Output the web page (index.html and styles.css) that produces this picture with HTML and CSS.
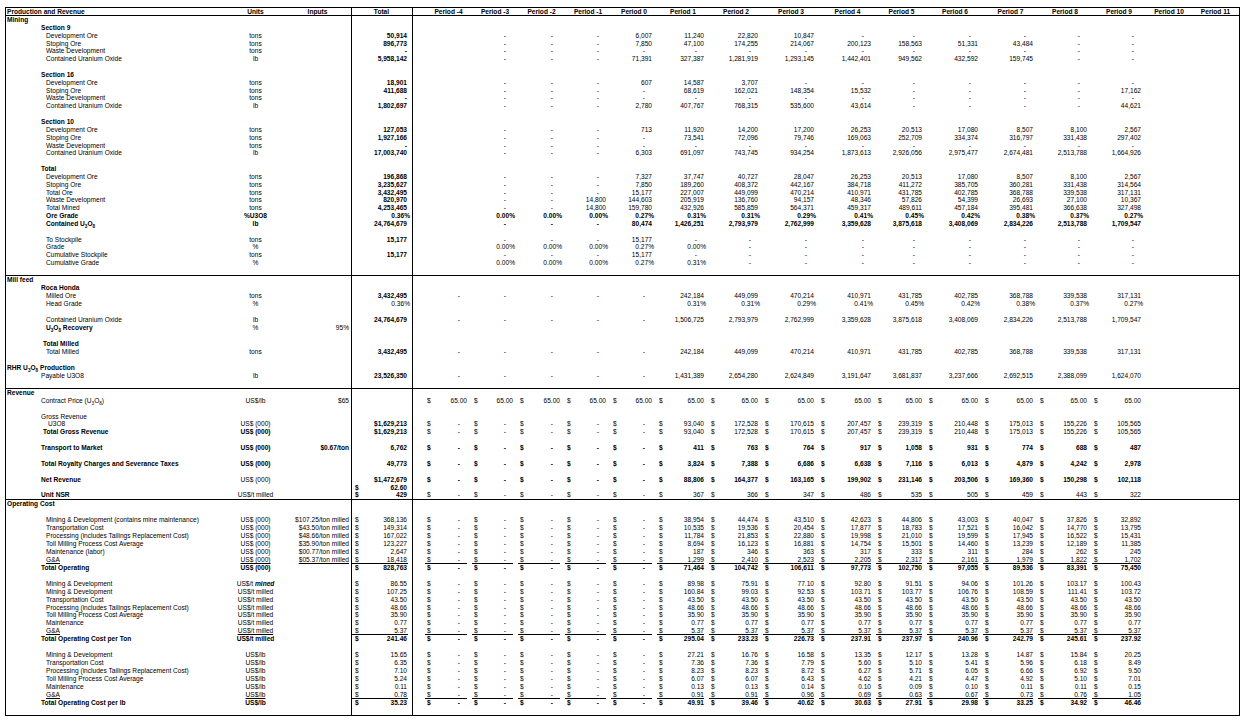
FILE: index.html
```html
<!DOCTYPE html>
<html lang="en">
<head>
<meta charset="utf-8">
<title>Production and Revenue</title>
<link rel="stylesheet" href="styles.css">
</head>
<body>
<div class="sheet">
<div class="r hdr"><span>Production and Revenue</span><span>Units</span><span class="ih">Inputs</span><span>Total</span><span></span><span>Period -4</span><span>Period -3</span><span>Period -2</span><span>Period -1</span><span>Period 0</span><span>Period 1</span><span>Period 2</span><span>Period 3</span><span>Period 4</span><span>Period 5</span><span>Period 6</span><span>Period 7</span><span>Period 8</span><span>Period 9</span><span>Period 10</span><span>Period 11</span></div>

<div class="sec sec-mine tb">
<div class="r b"><span class="i0">Mining</span></div>
<div class="r b"><span class="i1">Section 9</span></div>
<div class="r"><span class="i2">Development Ore</span><span>tons</span><span></span><span>50,914</span><span></span><span></span><span class="z">-</span><span class="z">-</span><span class="z">-</span><span>6,007</span><span>11,240</span><span>22,820</span><span>10,847</span><span class="z">-</span><span class="z">-</span><span class="z">-</span><span class="z">-</span><span class="z">-</span><span class="z">-</span></div>
<div class="r"><span class="i2">Stoping Ore</span><span>tons</span><span></span><span>896,773</span><span></span><span></span><span class="z">-</span><span class="z">-</span><span class="z">-</span><span>7,850</span><span>47,100</span><span>174,255</span><span>214,067</span><span>200,123</span><span>158,563</span><span>51,331</span><span>43,484</span><span class="z">-</span><span class="z">-</span></div>
<div class="r"><span class="i2">Waste Development</span><span>tons</span><span></span><span>-</span><span></span><span></span><span class="z">-</span><span class="z">-</span><span class="z">-</span><span class="z">-</span><span class="z">-</span><span class="z">-</span><span class="z">-</span><span class="z">-</span><span class="z">-</span><span class="z">-</span><span class="z">-</span><span class="z">-</span><span class="z">-</span></div>
<div class="r"><span class="i2">Contained Uranium Oxide</span><span>lb</span><span></span><span>5,958,142</span><span></span><span></span><span class="z">-</span><span class="z">-</span><span class="z">-</span><span>71,391</span><span>327,387</span><span>1,281,919</span><span>1,293,145</span><span>1,442,401</span><span>949,562</span><span>432,592</span><span>159,745</span><span class="z">-</span><span class="z">-</span></div>
<div class="r"></div>
<div class="r b"><span class="i1">Section 16</span></div>
<div class="r"><span class="i2">Development Ore</span><span>tons</span><span></span><span>18,901</span><span></span><span></span><span class="z">-</span><span class="z">-</span><span class="z">-</span><span>607</span><span>14,587</span><span>3,707</span><span class="z">-</span><span class="z">-</span><span class="z">-</span><span class="z">-</span><span class="z">-</span><span class="z">-</span><span class="z">-</span></div>
<div class="r"><span class="i2">Stoping Ore</span><span>tons</span><span></span><span>411,688</span><span></span><span></span><span class="z">-</span><span class="z">-</span><span class="z">-</span><span class="z">-</span><span>68,619</span><span>162,021</span><span>148,354</span><span>15,532</span><span class="z">-</span><span class="z">-</span><span class="z">-</span><span class="z">-</span><span>17,162</span></div>
<div class="r"><span class="i2">Waste Development</span><span>tons</span><span></span><span>-</span><span></span><span></span><span class="z">-</span><span class="z">-</span><span class="z">-</span><span class="z">-</span><span class="z">-</span><span class="z">-</span><span class="z">-</span><span class="z">-</span><span class="z">-</span><span class="z">-</span><span class="z">-</span><span class="z">-</span><span class="z">-</span></div>
<div class="r"><span class="i2">Contained Uranium Oxide</span><span>lb</span><span></span><span>1,802,697</span><span></span><span></span><span class="z">-</span><span class="z">-</span><span class="z">-</span><span>2,780</span><span>407,767</span><span>768,315</span><span>535,600</span><span>43,614</span><span class="z">-</span><span class="z">-</span><span class="z">-</span><span class="z">-</span><span>44,621</span></div>
<div class="r"></div>
<div class="r b"><span class="i1">Section 10</span></div>
<div class="r"><span class="i2">Development Ore</span><span>tons</span><span></span><span>127,053</span><span></span><span></span><span class="z">-</span><span class="z">-</span><span class="z">-</span><span>713</span><span>11,920</span><span>14,200</span><span>17,200</span><span>26,253</span><span>20,513</span><span>17,080</span><span>8,507</span><span>8,100</span><span>2,567</span></div>
<div class="r"><span class="i2">Stoping Ore</span><span>tons</span><span></span><span>1,927,166</span><span></span><span></span><span class="z">-</span><span class="z">-</span><span class="z">-</span><span class="z">-</span><span>73,541</span><span>72,096</span><span>79,746</span><span>169,063</span><span>252,709</span><span>334,374</span><span>316,797</span><span>331,438</span><span>297,402</span></div>
<div class="r"><span class="i2">Waste Development</span><span>tons</span><span></span><span>-</span><span></span><span></span><span class="z">-</span><span class="z">-</span><span class="z">-</span><span class="z">-</span><span class="z">-</span><span class="z">-</span><span class="z">-</span><span class="z">-</span><span class="z">-</span><span class="z">-</span><span class="z">-</span><span class="z">-</span><span class="z">-</span></div>
<div class="r"><span class="i2">Contained Uranium Oxide</span><span>lb</span><span></span><span>17,003,740</span><span></span><span></span><span class="z">-</span><span class="z">-</span><span class="z">-</span><span>6,303</span><span>691,097</span><span>743,745</span><span>934,254</span><span>1,873,613</span><span>2,926,056</span><span>2,975,477</span><span>2,674,481</span><span>2,513,788</span><span>1,664,926</span></div>
<div class="r"></div>
<div class="r b"><span class="i1">Total</span></div>
<div class="r"><span class="i2">Development Ore</span><span>tons</span><span></span><span>196,868</span><span></span><span></span><span class="z">-</span><span class="z">-</span><span class="z">-</span><span>7,327</span><span>37,747</span><span>40,727</span><span>28,047</span><span>26,253</span><span>20,513</span><span>17,080</span><span>8,507</span><span>8,100</span><span>2,567</span></div>
<div class="r"><span class="i2">Stoping Ore</span><span>tons</span><span></span><span>3,235,627</span><span></span><span></span><span class="z">-</span><span class="z">-</span><span class="z">-</span><span>7,850</span><span>189,260</span><span>408,372</span><span>442,167</span><span>384,718</span><span>411,272</span><span>385,705</span><span>360,281</span><span>331,438</span><span>314,564</span></div>
<div class="r"><span class="i2">Total Ore</span><span>tons</span><span></span><span>3,432,495</span><span></span><span></span><span class="z">-</span><span class="z">-</span><span class="z">-</span><span>15,177</span><span>227,007</span><span>449,099</span><span>470,214</span><span>410,971</span><span>431,785</span><span>402,785</span><span>368,788</span><span>339,538</span><span>317,131</span></div>
<div class="r"><span class="i2">Waste Development</span><span>tons</span><span></span><span>820,970</span><span></span><span></span><span class="z">-</span><span class="z">-</span><span>14,800</span><span>144,603</span><span>205,919</span><span>136,760</span><span>94,157</span><span>48,346</span><span>57,826</span><span>54,399</span><span>26,693</span><span>27,100</span><span>10,367</span></div>
<div class="r"><span class="i2">Total Mined</span><span>tons</span><span></span><span>4,253,465</span><span></span><span></span><span class="z">-</span><span class="z">-</span><span>14,800</span><span>159,780</span><span>432,926</span><span>585,859</span><span>564,371</span><span>459,317</span><span>489,611</span><span>457,184</span><span>395,481</span><span>366,638</span><span>327,498</span></div>
<div class="r b"><span class="i2">Ore Grade</span><span>%U3O8</span><span></span><span class="p">0.36%</span><span></span><span></span><span class="p">0.00%</span><span class="p">0.00%</span><span class="p">0.00%</span><span class="p">0.27%</span><span class="p">0.31%</span><span class="p">0.31%</span><span class="p">0.29%</span><span class="p">0.41%</span><span class="p">0.45%</span><span class="p">0.42%</span><span class="p">0.38%</span><span class="p">0.37%</span><span class="p">0.27%</span></div>
<div class="r b"><span class="i2">Contained U<sub>3</sub>O<sub>8</sub></span><span>lb</span><span></span><span>24,764,679</span><span></span><span></span><span class="z">-</span><span class="z">-</span><span class="z">-</span><span>80,474</span><span>1,426,251</span><span>2,793,979</span><span>2,762,999</span><span>3,359,628</span><span>3,875,618</span><span>3,408,069</span><span>2,834,226</span><span>2,513,788</span><span>1,709,547</span></div>
<div class="r"></div>
<div class="r"><span class="i2">To Stockpile</span><span>tons</span><span></span><span>15,177</span><span></span><span></span><span class="z">-</span><span class="z">-</span><span class="z">-</span><span>15,177</span><span class="z">-</span><span class="z">-</span><span class="z">-</span><span class="z">-</span><span class="z">-</span><span class="z">-</span><span class="z">-</span><span class="z">-</span><span class="z">-</span></div>
<div class="r"><span class="i2">Grade</span><span>%</span><span></span><span></span><span></span><span></span><span class="p">0.00%</span><span class="p">0.00%</span><span class="p">0.00%</span><span class="p">0.27%</span><span class="p">0.00%</span><span class="z">-</span><span class="z">-</span><span class="z">-</span><span class="z">-</span><span class="z">-</span><span class="z">-</span><span class="z">-</span><span class="z">-</span></div>
<div class="r"><span class="i2">Cumulative Stockpile</span><span>tons</span><span></span><span>15,177</span><span></span><span></span><span class="z">-</span><span class="z">-</span><span class="z">-</span><span>15,177</span><span class="z">-</span><span class="z">-</span><span class="z">-</span><span class="z">-</span><span class="z">-</span><span class="z">-</span><span class="z">-</span><span class="z">-</span><span class="z">-</span></div>
<div class="r"><span class="i2">Cumulative Grade</span><span>%</span><span></span><span></span><span></span><span></span><span class="p">0.00%</span><span class="p">0.00%</span><span class="p">0.00%</span><span class="p">0.27%</span><span class="p">0.31%</span><span class="z">-</span><span class="z">-</span><span class="z">-</span><span class="z">-</span><span class="z">-</span><span class="z">-</span><span class="z">-</span><span class="z">-</span></div>
<div class="r"></div>
</div>

<div class="sec sec-mill tb">
<div class="r b"><span class="i0">Mill feed</span></div>
<div class="r b"><span class="i1">Roca Honda</span></div>
<div class="r"><span class="i2">Milled Ore</span><span>tons</span><span></span><span>3,432,495</span><span></span><span class="z">-</span><span class="z">-</span><span class="z">-</span><span class="z">-</span><span class="z">-</span><span>242,184</span><span>449,099</span><span>470,214</span><span>410,971</span><span>431,785</span><span>402,785</span><span>368,788</span><span>339,538</span><span>317,131</span></div>
<div class="r"><span class="i2">Head Grade</span><span>%</span><span></span><span class="p n">0.36%</span><span></span><span></span><span></span><span></span><span></span><span></span><span class="p">0.31%</span><span class="p">0.31%</span><span class="p">0.29%</span><span class="p">0.41%</span><span class="p">0.45%</span><span class="p">0.42%</span><span class="p">0.38%</span><span class="p">0.37%</span><span class="p">0.27%</span></div>
<div class="r"></div>
<div class="r"><span class="i2">Contained Uranium Oxide</span><span>lb</span><span></span><span>24,764,679</span><span></span><span class="z">-</span><span class="z">-</span><span class="z">-</span><span class="z">-</span><span class="z">-</span><span>1,506,725</span><span>2,793,979</span><span>2,762,999</span><span>3,359,628</span><span>3,875,618</span><span>3,408,069</span><span>2,834,226</span><span>2,513,788</span><span>1,709,547</span></div>
<div class="r"><span class="i2 bb">U<sub>3</sub>O<sub>8</sub> Recovery</span><span>%</span><span>95%</span></div>
<div class="r"></div>
<div class="r b"><span class="i3">Total Milled</span></div>
<div class="r"><span class="i2">Total Milled</span><span>tons</span><span></span><span>3,432,495</span><span></span><span class="z">-</span><span class="z">-</span><span class="z">-</span><span class="z">-</span><span class="z">-</span><span>242,184</span><span>449,099</span><span>470,214</span><span>410,971</span><span>431,785</span><span>402,785</span><span>368,788</span><span>339,538</span><span>317,131</span></div>
<div class="r"></div>
<div class="r b"><span class="i0">RHR U<sub>3</sub>O<sub>8</sub> Production</span></div>
<div class="r"><span class="i1">Payable U3O8</span><span>lb</span><span></span><span>23,526,350</span><span></span><span class="z">-</span><span class="z">-</span><span class="z">-</span><span class="z">-</span><span class="z">-</span><span>1,431,389</span><span>2,654,280</span><span>2,624,849</span><span>3,191,647</span><span>3,681,837</span><span>3,237,666</span><span>2,692,515</span><span>2,388,099</span><span>1,624,070</span></div>
<div class="r"></div>
</div>

<div class="sec sec-rev tb">
<div class="r b"><span class="i0">Revenue</span></div>
<div class="r"><span class="i1">Contract Price (U<sub>3</sub>O<sub>8</sub>)</span><span>US$/lb</span><span>$65</span><span></span><span></span><span><i>$</i>65.00</span><span><i>$</i>65.00</span><span><i>$</i>65.00</span><span><i>$</i>65.00</span><span><i>$</i>65.00</span><span><i>$</i>65.00</span><span><i>$</i>65.00</span><span><i>$</i>65.00</span><span><i>$</i>65.00</span><span><i>$</i>65.00</span><span><i>$</i>65.00</span><span><i>$</i>65.00</span><span><i>$</i>65.00</span><span><i>$</i>65.00</span></div>
<div class="r"></div>
<div class="r"><span class="i1">Gross Revenue</span></div>
<div class="r"><span class="i4">U3O8</span><span>US$ (000)</span><span></span><span>$1,629,213</span><span></span><span class="z"><i>$</i>-</span><span class="z"><i>$</i>-</span><span class="z"><i>$</i>-</span><span class="z"><i>$</i>-</span><span class="z"><i>$</i>-</span><span><i>$</i>93,040</span><span><i>$</i>172,528</span><span><i>$</i>170,615</span><span><i>$</i>207,457</span><span><i>$</i>239,319</span><span><i>$</i>210,448</span><span><i>$</i>175,013</span><span><i>$</i>155,226</span><span><i>$</i>105,565</span></div>
<div class="r"><span class="i3 bb">Total Gross Revenue</span><span class="bb">US$ (000)</span><span></span><span>$1,629,213</span><span></span><span class="z"><i>$</i>-</span><span class="z"><i>$</i>-</span><span class="z"><i>$</i>-</span><span class="z"><i>$</i>-</span><span class="z"><i>$</i>-</span><span><i>$</i>93,040</span><span><i>$</i>172,528</span><span><i>$</i>170,615</span><span><i>$</i>207,457</span><span><i>$</i>239,319</span><span><i>$</i>210,448</span><span><i>$</i>175,013</span><span><i>$</i>155,226</span><span><i>$</i>105,565</span></div>
<div class="r"></div>
<div class="r b"><span class="i1">Transport to Market</span><span>US$ (000)</span><span>$0.67/ton</span><span>6,762</span><span></span><span class="z"><i>$</i>-</span><span class="z"><i>$</i>-</span><span class="z"><i>$</i>-</span><span class="z"><i>$</i>-</span><span class="z"><i>$</i>-</span><span><i>$</i>411</span><span><i>$</i>763</span><span><i>$</i>764</span><span><i>$</i>917</span><span><i>$</i>1,058</span><span><i>$</i>931</span><span><i>$</i>774</span><span><i>$</i>688</span><span><i>$</i>487</span></div>
<div class="r"></div>
<div class="r b"><span class="i1">Total Royalty Charges and Severance Taxes</span><span>US$ (000)</span><span></span><span>49,773</span><span></span><span class="z"><i>$</i>-</span><span class="z"><i>$</i>-</span><span class="z"><i>$</i>-</span><span class="z"><i>$</i>-</span><span class="z"><i>$</i>-</span><span><i>$</i>3,824</span><span><i>$</i>7,388</span><span><i>$</i>6,686</span><span><i>$</i>6,638</span><span><i>$</i>7,116</span><span><i>$</i>6,013</span><span><i>$</i>4,879</span><span><i>$</i>4,242</span><span><i>$</i>2,978</span></div>
<div class="r"></div>
<div class="r b"><span class="i1">Net Revenue</span><span class="n">US$ (000)</span><span></span><span>$1,472,679</span><span></span><span class="z"><i>$</i>-</span><span class="z"><i>$</i>-</span><span class="z"><i>$</i>-</span><span class="z"><i>$</i>-</span><span class="z"><i>$</i>-</span><span><i>$</i>88,806</span><span><i>$</i>164,377</span><span><i>$</i>163,165</span><span><i>$</i>199,902</span><span><i>$</i>231,146</span><span><i>$</i>203,506</span><span><i>$</i>169,360</span><span><i>$</i>150,298</span><span><i>$</i>102,118</span></div>
<div class="r"><span></span><span></span><span></span><span><i>$</i>62.60</span></div>
<div class="r"><span class="i1 bb">Unit NSR</span><span>US$/t milled</span><span></span><span><i>$</i>429</span><span></span><span class="z"><i>$</i>-</span><span class="z"><i>$</i>-</span><span class="z"><i>$</i>-</span><span class="z"><i>$</i>-</span><span class="z"><i>$</i>-</span><span><i>$</i>367</span><span><i>$</i>366</span><span><i>$</i>347</span><span><i>$</i>486</span><span><i>$</i>535</span><span><i>$</i>505</span><span><i>$</i>459</span><span><i>$</i>443</span><span><i>$</i>322</span></div>
</div>

<div class="sec sec-op">
<div class="r b"><span class="i0">Operating Cost</span></div>
<div class="r"></div>
<div class="r"><span class="i2">Mining &amp; Development (contains mine maintenance)</span><span>US$ (000)</span><span>$107.25/ton milled</span><span><i>$</i>368,136</span><span></span><span class="z"><i>$</i>-</span><span class="z"><i>$</i>-</span><span class="z"><i>$</i>-</span><span class="z"><i>$</i>-</span><span class="z"><i>$</i>-</span><span><i>$</i>38,954</span><span><i>$</i>44,474</span><span><i>$</i>43,510</span><span><i>$</i>42,623</span><span><i>$</i>44,806</span><span><i>$</i>43,003</span><span><i>$</i>40,047</span><span><i>$</i>37,826</span><span><i>$</i>32,892</span></div>
<div class="r"><span class="i2">Transportation Cost</span><span>US$ (000)</span><span>$43.50/ton milled</span><span><i>$</i>149,314</span><span></span><span class="z"><i>$</i>-</span><span class="z"><i>$</i>-</span><span class="z"><i>$</i>-</span><span class="z"><i>$</i>-</span><span class="z"><i>$</i>-</span><span><i>$</i>10,535</span><span><i>$</i>19,536</span><span><i>$</i>20,454</span><span><i>$</i>17,877</span><span><i>$</i>18,783</span><span><i>$</i>17,521</span><span><i>$</i>16,042</span><span><i>$</i>14,770</span><span><i>$</i>13,795</span></div>
<div class="r"><span class="i2">Processing (includes Tailings Replacement Cost)</span><span>US$ (000)</span><span>$48.66/ton milled</span><span><i>$</i>167,022</span><span></span><span class="z"><i>$</i>-</span><span class="z"><i>$</i>-</span><span class="z"><i>$</i>-</span><span class="z"><i>$</i>-</span><span class="z"><i>$</i>-</span><span><i>$</i>11,784</span><span><i>$</i>21,853</span><span><i>$</i>22,880</span><span><i>$</i>19,998</span><span><i>$</i>21,010</span><span><i>$</i>19,599</span><span><i>$</i>17,945</span><span><i>$</i>16,522</span><span><i>$</i>15,431</span></div>
<div class="r"><span class="i2">Toll Milling Process Cost Average</span><span>US$ (000)</span><span>$35.90/ton milled</span><span><i>$</i>123,227</span><span></span><span class="z"><i>$</i>-</span><span class="z"><i>$</i>-</span><span class="z"><i>$</i>-</span><span class="z"><i>$</i>-</span><span class="z"><i>$</i>-</span><span><i>$</i>8,694</span><span><i>$</i>16,123</span><span><i>$</i>16,881</span><span><i>$</i>14,754</span><span><i>$</i>15,501</span><span><i>$</i>14,460</span><span><i>$</i>13,239</span><span><i>$</i>12,189</span><span><i>$</i>11,385</span></div>
<div class="r"><span class="i2">Maintenance (labor)</span><span>US$ (000)</span><span>$00.77/ton milled</span><span><i>$</i>2,647</span><span></span><span class="z"><i>$</i>-</span><span class="z"><i>$</i>-</span><span class="z"><i>$</i>-</span><span class="z"><i>$</i>-</span><span class="z"><i>$</i>-</span><span><i>$</i>187</span><span><i>$</i>346</span><span><i>$</i>363</span><span><i>$</i>317</span><span><i>$</i>333</span><span><i>$</i>311</span><span><i>$</i>284</span><span><i>$</i>262</span><span><i>$</i>245</span></div>
<div class="r"><span class="i2"><u>G&amp;A</u></span><span><u>US$ (000)</u></span><span><u>$05.37/ton milled</u></span><span class="u"><i>$</i>18,418</span><span></span><span class="z u"><i>$</i>-</span><span class="z u"><i>$</i>-</span><span class="z u"><i>$</i>-</span><span class="z u"><i>$</i>-</span><span class="z u"><i>$</i>-</span><span class="u"><i>$</i>1,299</span><span class="u"><i>$</i>2,410</span><span class="u"><i>$</i>2,523</span><span class="u"><i>$</i>2,205</span><span class="u"><i>$</i>2,317</span><span class="u"><i>$</i>2,161</span><span class="u"><i>$</i>1,979</span><span class="u"><i>$</i>1,822</span><span class="u"><i>$</i>1,702</span></div>
<div class="r b"><span class="i1">Total Operating</span><span>US$ (000)</span><span></span><span><i>$</i>828,763</span><span></span><span class="z"><i>$</i>-</span><span class="z"><i>$</i>-</span><span class="z"><i>$</i>-</span><span class="z"><i>$</i>-</span><span class="z"><i>$</i>-</span><span><i>$</i>71,464</span><span><i>$</i>104,742</span><span><i>$</i>106,611</span><span><i>$</i>97,773</span><span><i>$</i>102,750</span><span><i>$</i>97,055</span><span><i>$</i>89,536</span><span><i>$</i>83,391</span><span><i>$</i>75,450</span></div>
<div class="r"></div>
<div class="r"><span class="i2">Mining &amp; Development</span><span>US$/t <em>mined</em></span><span></span><span><i>$</i>86.55</span><span></span><span class="z"><i>$</i>-</span><span class="z"><i>$</i>-</span><span class="z"><i>$</i>-</span><span class="z"><i>$</i>-</span><span class="z"><i>$</i>-</span><span><i>$</i>89.98</span><span><i>$</i>75.91</span><span><i>$</i>77.10</span><span><i>$</i>92.80</span><span><i>$</i>91.51</span><span><i>$</i>94.06</span><span><i>$</i>101.26</span><span><i>$</i>103.17</span><span><i>$</i>100.43</span></div>
<div class="r"><span class="i2">Mining &amp; Development</span><span>US$/t milled</span><span></span><span><i>$</i>107.25</span><span></span><span class="z"><i>$</i>-</span><span class="z"><i>$</i>-</span><span class="z"><i>$</i>-</span><span class="z"><i>$</i>-</span><span class="z"><i>$</i>-</span><span><i>$</i>160.84</span><span><i>$</i>99.03</span><span><i>$</i>92.53</span><span><i>$</i>103.71</span><span><i>$</i>103.77</span><span><i>$</i>106.76</span><span><i>$</i>108.59</span><span><i>$</i>111.41</span><span><i>$</i>103.72</span></div>
<div class="r"><span class="i2">Transportation Cost</span><span>US$/t milled</span><span></span><span><i>$</i>43.50</span><span></span><span class="z"><i>$</i>-</span><span class="z"><i>$</i>-</span><span class="z"><i>$</i>-</span><span class="z"><i>$</i>-</span><span class="z"><i>$</i>-</span><span><i>$</i>43.50</span><span><i>$</i>43.50</span><span><i>$</i>43.50</span><span><i>$</i>43.50</span><span><i>$</i>43.50</span><span><i>$</i>43.50</span><span><i>$</i>43.50</span><span><i>$</i>43.50</span><span><i>$</i>43.50</span></div>
<div class="r"><span class="i2">Processing (includes Tailings Replacement Cost)</span><span>US$/t milled</span><span></span><span><i>$</i>48.66</span><span></span><span class="z"><i>$</i>-</span><span class="z"><i>$</i>-</span><span class="z"><i>$</i>-</span><span class="z"><i>$</i>-</span><span class="z"><i>$</i>-</span><span><i>$</i>48.66</span><span><i>$</i>48.66</span><span><i>$</i>48.66</span><span><i>$</i>48.66</span><span><i>$</i>48.66</span><span><i>$</i>48.66</span><span><i>$</i>48.66</span><span><i>$</i>48.66</span><span><i>$</i>48.66</span></div>
<div class="r"><span class="i2">Toll Milling Process Cost Average</span><span>US$/t milled</span><span></span><span><i>$</i>35.90</span><span></span><span class="z"><i>$</i>-</span><span class="z"><i>$</i>-</span><span class="z"><i>$</i>-</span><span class="z"><i>$</i>-</span><span class="z"><i>$</i>-</span><span><i>$</i>35.90</span><span><i>$</i>35.90</span><span><i>$</i>35.90</span><span><i>$</i>35.90</span><span><i>$</i>35.90</span><span><i>$</i>35.90</span><span><i>$</i>35.90</span><span><i>$</i>35.90</span><span><i>$</i>35.90</span></div>
<div class="r"><span class="i2">Maintenance</span><span>US$/t milled</span><span></span><span><i>$</i>0.77</span><span></span><span class="z"><i>$</i>-</span><span class="z"><i>$</i>-</span><span class="z"><i>$</i>-</span><span class="z"><i>$</i>-</span><span class="z"><i>$</i>-</span><span><i>$</i>0.77</span><span><i>$</i>0.77</span><span><i>$</i>0.77</span><span><i>$</i>0.77</span><span><i>$</i>0.77</span><span><i>$</i>0.77</span><span><i>$</i>0.77</span><span><i>$</i>0.77</span><span><i>$</i>0.77</span></div>
<div class="r"><span class="i2"><u>G&amp;A</u></span><span><u>US$/t milled</u></span><span></span><span class="u"><i>$</i>5.37</span><span></span><span class="z u"><i>$</i>-</span><span class="z u"><i>$</i>-</span><span class="z u"><i>$</i>-</span><span class="z u"><i>$</i>-</span><span class="z u"><i>$</i>-</span><span class="u"><i>$</i>5.37</span><span class="u"><i>$</i>5.37</span><span class="u"><i>$</i>5.37</span><span class="u"><i>$</i>5.37</span><span class="u"><i>$</i>5.37</span><span class="u"><i>$</i>5.37</span><span class="u"><i>$</i>5.37</span><span class="u"><i>$</i>5.37</span><span class="u"><i>$</i>5.37</span></div>
<div class="r b"><span class="i1">Total Operating Cost per Ton</span><span>US$/t milled</span><span></span><span><i>$</i>241.46</span><span></span><span class="z"><i>$</i>-</span><span class="z"><i>$</i>-</span><span class="z"><i>$</i>-</span><span class="z"><i>$</i>-</span><span class="z"><i>$</i>-</span><span><i>$</i>295.04</span><span><i>$</i>233.23</span><span><i>$</i>226.73</span><span><i>$</i>237.91</span><span><i>$</i>237.97</span><span><i>$</i>240.96</span><span><i>$</i>242.79</span><span><i>$</i>245.61</span><span><i>$</i>237.92</span></div>
<div class="r"></div>
<div class="r"><span class="i2">Mining &amp; Development</span><span>US$/lb</span><span></span><span><i>$</i>15.65</span><span></span><span class="z"><i>$</i>-</span><span class="z"><i>$</i>-</span><span class="z"><i>$</i>-</span><span class="z"><i>$</i>-</span><span class="z"><i>$</i>-</span><span><i>$</i>27.21</span><span><i>$</i>16.76</span><span><i>$</i>16.58</span><span><i>$</i>13.35</span><span><i>$</i>12.17</span><span><i>$</i>13.28</span><span><i>$</i>14.87</span><span><i>$</i>15.84</span><span><i>$</i>20.25</span></div>
<div class="r"><span class="i2">Transportation Cost</span><span>US$/lb</span><span></span><span><i>$</i>6.35</span><span></span><span class="z"><i>$</i>-</span><span class="z"><i>$</i>-</span><span class="z"><i>$</i>-</span><span class="z"><i>$</i>-</span><span class="z"><i>$</i>-</span><span><i>$</i>7.36</span><span><i>$</i>7.36</span><span><i>$</i>7.79</span><span><i>$</i>5.60</span><span><i>$</i>5.10</span><span><i>$</i>5.41</span><span><i>$</i>5.96</span><span><i>$</i>6.18</span><span><i>$</i>8.49</span></div>
<div class="r"><span class="i2">Processing (includes Tailings Replacement Cost)</span><span>US$/lb</span><span></span><span><i>$</i>7.10</span><span></span><span class="z"><i>$</i>-</span><span class="z"><i>$</i>-</span><span class="z"><i>$</i>-</span><span class="z"><i>$</i>-</span><span class="z"><i>$</i>-</span><span><i>$</i>8.23</span><span><i>$</i>8.23</span><span><i>$</i>8.72</span><span><i>$</i>6.27</span><span><i>$</i>5.71</span><span><i>$</i>6.05</span><span><i>$</i>6.66</span><span><i>$</i>6.92</span><span><i>$</i>9.50</span></div>
<div class="r"><span class="i2">Toll Milling Process Cost Average</span><span>US$/lb</span><span></span><span><i>$</i>5.24</span><span></span><span class="z"><i>$</i>-</span><span class="z"><i>$</i>-</span><span class="z"><i>$</i>-</span><span class="z"><i>$</i>-</span><span class="z"><i>$</i>-</span><span><i>$</i>6.07</span><span><i>$</i>6.07</span><span><i>$</i>6.43</span><span><i>$</i>4.62</span><span><i>$</i>4.21</span><span><i>$</i>4.47</span><span><i>$</i>4.92</span><span><i>$</i>5.10</span><span><i>$</i>7.01</span></div>
<div class="r"><span class="i2">Maintenance</span><span>US$/lb</span><span></span><span><i>$</i>0.11</span><span></span><span class="z"><i>$</i>-</span><span class="z"><i>$</i>-</span><span class="z"><i>$</i>-</span><span class="z"><i>$</i>-</span><span class="z"><i>$</i>-</span><span><i>$</i>0.13</span><span><i>$</i>0.13</span><span><i>$</i>0.14</span><span><i>$</i>0.10</span><span><i>$</i>0.09</span><span><i>$</i>0.10</span><span><i>$</i>0.11</span><span><i>$</i>0.11</span><span><i>$</i>0.15</span></div>
<div class="r"><span class="i2"><u>G&amp;A</u></span><span><u>US$/lb</u></span><span></span><span class="u"><i>$</i>0.78</span><span></span><span class="z u"><i>$</i>-</span><span class="z u"><i>$</i>-</span><span class="z u"><i>$</i>-</span><span class="z u"><i>$</i>-</span><span class="z u"><i>$</i>-</span><span class="u"><i>$</i>0.91</span><span class="u"><i>$</i>0.91</span><span class="u"><i>$</i>0.96</span><span class="u"><i>$</i>0.69</span><span class="u"><i>$</i>0.63</span><span class="u"><i>$</i>0.67</span><span class="u"><i>$</i>0.73</span><span class="u"><i>$</i>0.76</span><span class="u"><i>$</i>1.05</span></div>
<div class="r b"><span class="i1">Total Operating Cost per lb</span><span>US$/lb</span><span></span><span><i>$</i>35.23</span><span></span><span class="z"><i>$</i>-</span><span class="z"><i>$</i>-</span><span class="z"><i>$</i>-</span><span class="z"><i>$</i>-</span><span class="z"><i>$</i>-</span><span><i>$</i>49.91</span><span><i>$</i>39.46</span><span><i>$</i>40.62</span><span><i>$</i>30.63</span><span><i>$</i>27.91</span><span><i>$</i>29.98</span><span><i>$</i>33.25</span><span><i>$</i>34.92</span><span><i>$</i>46.46</span></div>
<div class="r"></div>
</div>
</div>
</body>
</html>
```

FILE: styles.css
```css
* {
  box-sizing: border-box;
}

html,
body {
  margin: 0;
  padding: 0;
  background: #fff;
}

body {
  font-family: "Liberation Sans", Arial, sans-serif;
  font-size: 6.6px;
  color: #000;
}

/* the whole worksheet: outer box plus the two column rules around "Total" */
.sheet {
  margin: 7px 0 0 5px;
  width: 1235px;
  border: 1px solid #000;
  background-image: linear-gradient(#000, #000), linear-gradient(#000, #000);
  background-size: 1px 100%, 1px 100%;
  background-position: 345px 0, 406px 0;
  background-repeat: no-repeat;
}

.sec + .sec {
  border-top: 1px solid #000;
}

/* one worksheet row */
.r {
  display: grid;
  grid-template-columns:
    210px 79px 56px 61px 13px
    47px 46px 47px 46px 46px
    52px 54px 56px 57px 51px
    56px 55px 54px 54px 46px 47px;
  height: 8px;
  line-height: 8px;
  white-space: nowrap;
}

.sec-mine > .r {
  height: 7.85px;
  line-height: 7.85px;
}

.sec-mill > .r {
  height: 8px;
  line-height: 8px;
}

.sec-rev > .r {
  height: 7.9px;
  line-height: 7.9px;
}

.sec-op > .r {
  height: 7.95px;
  line-height: 7.95px;
}

.r > span {
  min-width: 0;
  text-align: right;
  padding: 0 5px 0 2px;
}

.r > span:nth-child(1) {
  text-align: left;
  padding: 0;
}

.r > span:nth-child(2) {
  text-align: center;
  padding: 0;
}

.r > span:nth-child(3) {
  padding: 0 2px 0 0;
}

.r > span:nth-child(4) {
  padding: 0 5px 0 4px;
}

/* label indents */
.r > span.i0 { padding-left: 1px; }
.r > span.i1 { padding-left: 35px; }
.r > span.i2 { padding-left: 40px; }
.r > span.i3 { padding-left: 37px; }
.r > span.i4 { padding-left: 42px; }

/* header row */
.r.hdr {
  height: 8px;
  line-height: 7px;
  border-bottom: 1px solid #000;
  font-weight: bold;
}

.r.hdr > span {
  text-align: center;
  padding: 0;
}

.r.hdr > span:first-child {
  text-align: left;
  padding-left: 1px;
}

.r.hdr > span.ih {
  padding-right: 11px;
}

/* zero dash, percent */
.r > span.z {
  padding-right: 12px;
}

.r > span.p {
  padding-right: 3px;
}

.r > span.p:nth-child(4) {
  padding-right: 2px;
}

/* weights */
.b > span {
  font-weight: bold;
}

.r > span.bb {
  font-weight: bold;
}

.tb > .r > span:nth-child(4):not(.n) {
  font-weight: bold;
}

.r > span.n {
  font-weight: normal;
}

/* accounting currency sign */
.r i {
  float: left;
  font-style: normal;
}

.r em {
  font-style: italic;
  font-weight: bold;
}

.r u {
  text-decoration: underline;
}

/* single accounting underline under a value */
.r > span.u {
  background-image: linear-gradient(#000, #000);
  background-repeat: no-repeat;
  background-position: 0 100%;
  background-size: calc(100% - 5px) 1px;
}

.r > span.u:nth-child(4) {
  background-position: 1px 100%;
  background-size: calc(100% - 5px) 1px;
}

.r sub {
  font-size: 4.6px;
  line-height: 0;
  vertical-align: -1.5px;
}
```
